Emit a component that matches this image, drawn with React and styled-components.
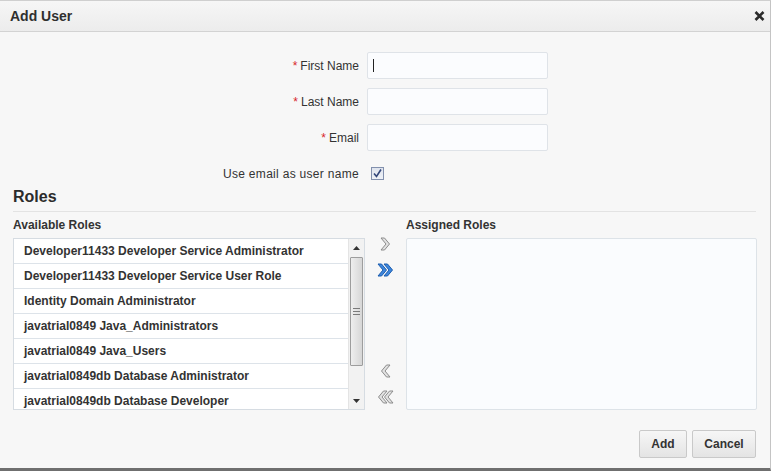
import React from 'react';
import styled, { createGlobalStyle } from 'styled-components';

const GlobalStyle = createGlobalStyle`
	html, body {
		margin: 0;
		padding: 0;
		background: #f7f7f7;
	}
	* {
		box-sizing: border-box;
	}
`;

const availableRoles = [
	'Developer11433 Developer Service Administrator',
	'Developer11433 Developer Service User Role',
	'Identity Domain Administrator',
	'javatrial0849 Java_Administrators',
	'javatrial0849 Java_Users',
	'javatrial0849db Database Administrator',
	'javatrial0849db Database Developer',
];

const Chevron = ({ dir = 'right', double, active }) => {
	const fill = active ? '#3d86dc' : '#e2e2e2';
	const stroke = active ? '#1c5cae' : '#8c8c8c';
	const one = '1,1 4.5,1 9.5,7 4.5,13 1,13 6,7';
	const two = '7,1 10.5,1 15.5,7 10.5,13 7,13 12,7';
	const w = double ? 17 : 11;
	return (
		<svg width={w} height="14" viewBox={`0 0 ${w} 14`}>
			<g transform={dir === 'left' ? `translate(${w} 0) scale(-1 1)` : undefined}>
				<polygon points={one} fill={fill} stroke={stroke} strokeWidth="1" strokeLinejoin="round" />
				{double && <polygon points={two} fill={fill} stroke={stroke} strokeWidth="1" strokeLinejoin="round" />}
			</g>
		</svg>
	);
};

const App = () => {
	return (
		<>
			<GlobalStyle />
			<Dialog>
				<Header>
					<Title>Add User</Title>
					<Close aria-label="close">
						<svg width="11" height="10" viewBox="0 0 11 10">
							<path d="M1.5 1 L9.5 9 M9.5 1 L1.5 9" stroke="#2b2b2b" strokeWidth="2.6" />
						</svg>
					</Close>
				</Header>

				<Body>
					<Form>
						<Label>
							<Req>*</Req>First Name
						</Label>
						<Field>
							<Caret />
						</Field>
						<Label>
							<Req>*</Req>Last Name
						</Label>
						<Field />
						<Label>
							<Req>*</Req>Email
						</Label>
						<Field />
						<Label wide>Use email as user name</Label>
						<CheckBox>
							<svg width="11" height="11" viewBox="0 0 11 11">
								<path d="M2 5.5 L4.5 8.5 L9 1.5" fill="none" stroke="#34477a" strokeWidth="1.6" />
							</svg>
						</CheckBox>
					</Form>

					<SectionTitle>Roles</SectionTitle>

					<Shuttle>
						<ListLabel>Available Roles</ListLabel>
						<span />
						<ListLabel>Assigned Roles</ListLabel>

						<ListBox>
							<Rows>
								{availableRoles.map((r) => (
									<Row key={r}>{r}</Row>
								))}
							</Rows>
							<ScrollBar>
								<ScrollArrow>
									<svg width="7" height="4" viewBox="0 0 7 4">
										<path d="M0 4 L3.5 0 L7 4 Z" fill="#333" />
									</svg>
								</ScrollArrow>
								<Track>
									<Thumb>
										<Grip />
										<Grip />
										<Grip />
									</Thumb>
								</Track>
								<ScrollArrow>
									<svg width="7" height="4" viewBox="0 0 7 4">
										<path d="M0 0 L7 0 L3.5 4 Z" fill="#333" />
									</svg>
								</ScrollArrow>
							</ScrollBar>
						</ListBox>

						<Moves>
							<MoveGroup>
								<MoveButton>
									<Chevron />
								</MoveButton>
								<MoveButton>
									<Chevron double active />
								</MoveButton>
							</MoveGroup>
							<MoveGroup>
								<MoveButton>
									<Chevron dir="left" />
								</MoveButton>
								<MoveButton>
									<Chevron dir="left" double />
								</MoveButton>
							</MoveGroup>
						</Moves>

						<AssignedBox />
					</Shuttle>

					<Footer>
						<Button width={48}>Add</Button>
						<Button width={64}>Cancel</Button>
					</Footer>
				</Body>
			</Dialog>
		</>
	);
};

const Dialog = styled.div`
	width: 771px;
	height: 471px;
	display: flex;
	flex-direction: column;
	background: #f7f7f7;
	border-top: 1px solid #cfcfcf;
	border-right: 1px solid #c4c4c4;
	border-bottom: 3px solid #6f6f6f;
	font-family: 'Liberation Sans', Arial, sans-serif;
	color: #333;
`;

const Header = styled.div`
	height: 31px;
	flex: none;
	display: flex;
	align-items: center;
	justify-content: space-between;
	padding: 0 5px 0 10px;
	background: linear-gradient(#f6f6f6, #ececec);
	border-bottom: 1px solid #d3d3d3;
`;

const Title = styled.div`
	font-size: 14px;
	font-weight: bold;
	color: #2f2f2f;
`;

const Close = styled.div`
	display: flex;
	margin-top: -1px;
`;

const Body = styled.div`
	flex: 1;
	padding: 20px 14px 0 13px;
`;

const Form = styled.div`
	display: grid;
	grid-template-columns: 346px 181px;
	grid-auto-rows: 27px;
	column-gap: 8px;
	row-gap: 9px;
	align-items: center;
`;

const Label = styled.div`
	justify-self: end;
	font-size: 12px;
	letter-spacing: ${(p) => (p.wide ? '0.3px' : '0')};
	color: #333;
`;

const Req = styled.span`
	color: #d8262b;
	margin-right: 3px;
`;

const Field = styled.div`
	height: 27px;
	background: #fbfcfe;
	border: 1px solid #dfe3e8;
	border-radius: 2px;
	display: flex;
	align-items: center;
	padding-left: 5px;
`;

const Caret = styled.span`
	width: 1px;
	height: 13px;
	background: #222;
`;

const CheckBox = styled.div`
	width: 13px;
	height: 13px;
	margin-left: 4px;
	border: 1px solid #8290ad;
	background: linear-gradient(#dfe4ee, #eef1f7);
	display: flex;
	align-items: center;
	justify-content: center;
`;

const SectionTitle = styled.div`
	font-size: 16px;
	font-weight: bold;
	line-height: 20px;
	color: #2b2b2b;
	padding-bottom: 4px;
	border-bottom: 1px solid #e3e3e3;
`;

const Shuttle = styled.div`
	display: grid;
	grid-template-columns: 352px 41px 351px;
	grid-template-rows: 16px 172px;
	row-gap: 5px;
	margin-top: 5px;
`;

const ListLabel = styled.div`
	font-size: 12px;
	font-weight: bold;
	line-height: 16px;
	color: #333;
`;

const ListBox = styled.div`
	display: flex;
	border: 1px solid #d6dce2;
	background: #fff;
	overflow: hidden;
`;

const Rows = styled.div`
	flex: 1;
	overflow: hidden;
`;

const Row = styled.div`
	height: 25px;
	line-height: 24px;
	padding-left: 10px;
	font-size: 12px;
	font-weight: bold;
	color: #333;
	white-space: nowrap;
	border-bottom: 1px solid #dde3e9;
`;

const ScrollBar = styled.div`
	width: 16px;
	flex: none;
	display: flex;
	flex-direction: column;
	background: #f2f2f2;
	border-left: 1px solid #e4e4e4;
`;

const ScrollArrow = styled.div`
	height: 17px;
	flex: none;
	display: flex;
	align-items: center;
	justify-content: center;
`;

const Track = styled.div`
	flex: 1;
	padding: 1px 1px 0 1px;
`;

const Thumb = styled.div`
	height: 109px;
	border: 1px solid #9d9d9d;
	border-radius: 1px;
	background: linear-gradient(to right, #eeeeee, #d6d6d6);
	display: flex;
	flex-direction: column;
	align-items: center;
	justify-content: center;
	gap: 2px;
`;

const Grip = styled.span`
	width: 7px;
	height: 1px;
	background: #7a7a7a;
`;

const Moves = styled.div`
	display: flex;
	flex-direction: column;
	justify-content: space-between;
	align-items: center;
	padding: 0 0 6px 0;
	margin-top: -1px;
`;

const MoveGroup = styled.div`
	display: flex;
	flex-direction: column;
	align-items: center;
	gap: 12px;
`;

const MoveButton = styled.div`
	height: 14px;
	display: flex;
`;

const AssignedBox = styled.div`
	border: 1px solid #dde3e8;
	border-radius: 2px;
	background: #fafcfe;
`;

const Footer = styled.div`
	display: flex;
	justify-content: flex-end;
	gap: 5px;
	margin-top: 20px;
`;

const Button = styled.div`
	width: ${(p) => p.width}px;
	height: 28px;
	display: flex;
	align-items: center;
	justify-content: center;
	font-size: 12px;
	font-weight: bold;
	color: #333;
	border: 1px solid #c9c9c9;
	border-radius: 2px;
	background: linear-gradient(#f6f6f6, #e4e4e4);
`;

export default App;
